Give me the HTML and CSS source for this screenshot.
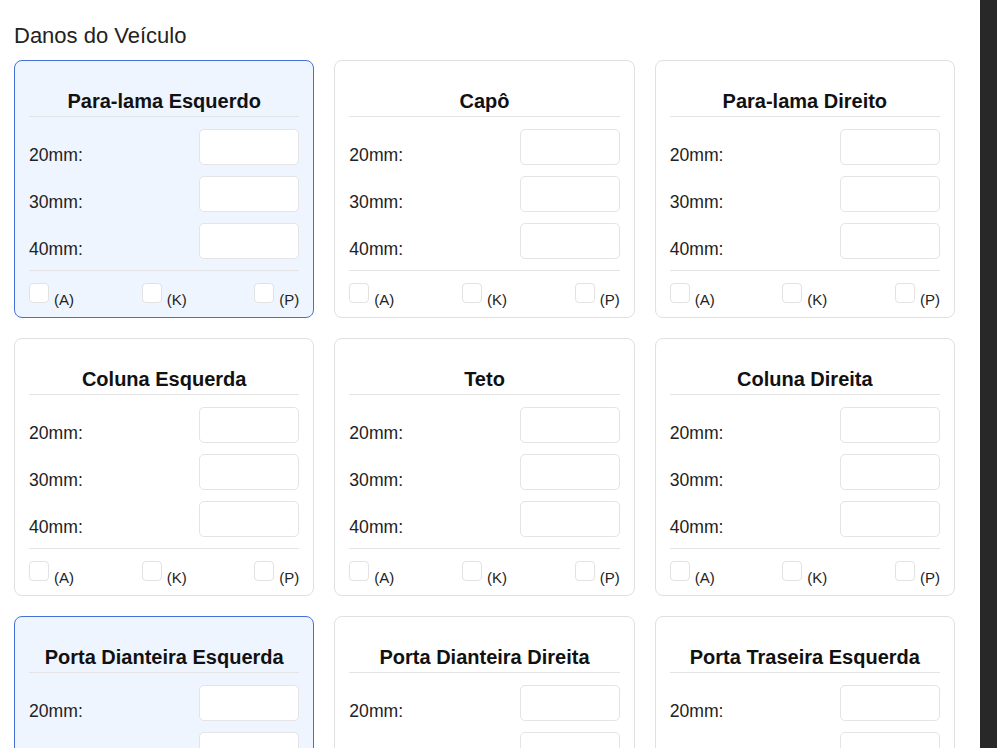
FILE: index.html
```html
<!DOCTYPE html>
<html lang="pt">
<head>
<meta charset="utf-8">
<title>Danos do Veículo</title>
<link rel="stylesheet" href="styles.css">
</head>
<body>
<main class="page">
  <h2 class="page-title">Danos do Veículo</h2>
  <div class="grid">
    <section class="card selected">
      <h3 class="card-title">Para-lama Esquerdo</h3>
      <div class="fields">
        <label class="field"><span class="field-label">20mm:</span><input class="field-input" type="text"></label>
        <label class="field"><span class="field-label">30mm:</span><input class="field-input" type="text"></label>
        <label class="field"><span class="field-label">40mm:</span><input class="field-input" type="text"></label>
      </div>
      <div class="checks">
        <label class="check"><input class="check-box" type="checkbox"><span class="check-text">(A)</span></label>
        <label class="check"><input class="check-box" type="checkbox"><span class="check-text">(K)</span></label>
        <label class="check"><input class="check-box" type="checkbox"><span class="check-text">(P)</span></label>
      </div>
    </section>
    <section class="card">
      <h3 class="card-title">Capô</h3>
      <div class="fields">
        <label class="field"><span class="field-label">20mm:</span><input class="field-input" type="text"></label>
        <label class="field"><span class="field-label">30mm:</span><input class="field-input" type="text"></label>
        <label class="field"><span class="field-label">40mm:</span><input class="field-input" type="text"></label>
      </div>
      <div class="checks">
        <label class="check"><input class="check-box" type="checkbox"><span class="check-text">(A)</span></label>
        <label class="check"><input class="check-box" type="checkbox"><span class="check-text">(K)</span></label>
        <label class="check"><input class="check-box" type="checkbox"><span class="check-text">(P)</span></label>
      </div>
    </section>
    <section class="card">
      <h3 class="card-title">Para-lama Direito</h3>
      <div class="fields">
        <label class="field"><span class="field-label">20mm:</span><input class="field-input" type="text"></label>
        <label class="field"><span class="field-label">30mm:</span><input class="field-input" type="text"></label>
        <label class="field"><span class="field-label">40mm:</span><input class="field-input" type="text"></label>
      </div>
      <div class="checks">
        <label class="check"><input class="check-box" type="checkbox"><span class="check-text">(A)</span></label>
        <label class="check"><input class="check-box" type="checkbox"><span class="check-text">(K)</span></label>
        <label class="check"><input class="check-box" type="checkbox"><span class="check-text">(P)</span></label>
      </div>
    </section>
    <section class="card">
      <h3 class="card-title">Coluna Esquerda</h3>
      <div class="fields">
        <label class="field"><span class="field-label">20mm:</span><input class="field-input" type="text"></label>
        <label class="field"><span class="field-label">30mm:</span><input class="field-input" type="text"></label>
        <label class="field"><span class="field-label">40mm:</span><input class="field-input" type="text"></label>
      </div>
      <div class="checks">
        <label class="check"><input class="check-box" type="checkbox"><span class="check-text">(A)</span></label>
        <label class="check"><input class="check-box" type="checkbox"><span class="check-text">(K)</span></label>
        <label class="check"><input class="check-box" type="checkbox"><span class="check-text">(P)</span></label>
      </div>
    </section>
    <section class="card">
      <h3 class="card-title">Teto</h3>
      <div class="fields">
        <label class="field"><span class="field-label">20mm:</span><input class="field-input" type="text"></label>
        <label class="field"><span class="field-label">30mm:</span><input class="field-input" type="text"></label>
        <label class="field"><span class="field-label">40mm:</span><input class="field-input" type="text"></label>
      </div>
      <div class="checks">
        <label class="check"><input class="check-box" type="checkbox"><span class="check-text">(A)</span></label>
        <label class="check"><input class="check-box" type="checkbox"><span class="check-text">(K)</span></label>
        <label class="check"><input class="check-box" type="checkbox"><span class="check-text">(P)</span></label>
      </div>
    </section>
    <section class="card">
      <h3 class="card-title">Coluna Direita</h3>
      <div class="fields">
        <label class="field"><span class="field-label">20mm:</span><input class="field-input" type="text"></label>
        <label class="field"><span class="field-label">30mm:</span><input class="field-input" type="text"></label>
        <label class="field"><span class="field-label">40mm:</span><input class="field-input" type="text"></label>
      </div>
      <div class="checks">
        <label class="check"><input class="check-box" type="checkbox"><span class="check-text">(A)</span></label>
        <label class="check"><input class="check-box" type="checkbox"><span class="check-text">(K)</span></label>
        <label class="check"><input class="check-box" type="checkbox"><span class="check-text">(P)</span></label>
      </div>
    </section>
    <section class="card selected">
      <h3 class="card-title">Porta Dianteira Esquerda</h3>
      <div class="fields">
        <label class="field"><span class="field-label">20mm:</span><input class="field-input" type="text"></label>
        <label class="field"><span class="field-label">30mm:</span><input class="field-input" type="text"></label>
        <label class="field"><span class="field-label">40mm:</span><input class="field-input" type="text"></label>
      </div>
      <div class="checks">
        <label class="check"><input class="check-box" type="checkbox"><span class="check-text">(A)</span></label>
        <label class="check"><input class="check-box" type="checkbox"><span class="check-text">(K)</span></label>
        <label class="check"><input class="check-box" type="checkbox"><span class="check-text">(P)</span></label>
      </div>
    </section>
    <section class="card">
      <h3 class="card-title">Porta Dianteira Direita</h3>
      <div class="fields">
        <label class="field"><span class="field-label">20mm:</span><input class="field-input" type="text"></label>
        <label class="field"><span class="field-label">30mm:</span><input class="field-input" type="text"></label>
        <label class="field"><span class="field-label">40mm:</span><input class="field-input" type="text"></label>
      </div>
      <div class="checks">
        <label class="check"><input class="check-box" type="checkbox"><span class="check-text">(A)</span></label>
        <label class="check"><input class="check-box" type="checkbox"><span class="check-text">(K)</span></label>
        <label class="check"><input class="check-box" type="checkbox"><span class="check-text">(P)</span></label>
      </div>
    </section>
    <section class="card">
      <h3 class="card-title">Porta Traseira Esquerda</h3>
      <div class="fields">
        <label class="field"><span class="field-label">20mm:</span><input class="field-input" type="text"></label>
        <label class="field"><span class="field-label">30mm:</span><input class="field-input" type="text"></label>
        <label class="field"><span class="field-label">40mm:</span><input class="field-input" type="text"></label>
      </div>
      <div class="checks">
        <label class="check"><input class="check-box" type="checkbox"><span class="check-text">(A)</span></label>
        <label class="check"><input class="check-box" type="checkbox"><span class="check-text">(K)</span></label>
        <label class="check"><input class="check-box" type="checkbox"><span class="check-text">(P)</span></label>
      </div>
    </section>
  </div>
</main>
<div class="scrollbar"></div>
</body>
</html>
```
FILE: styles.css
```css
* {
  box-sizing: border-box;
}

html, body {
  height: 100%;
}

body {
  margin: 0;
  display: flex;
  overflow: hidden;
  background: #ffffff;
  color: #222222;
  font-family: "Liberation Sans", Arial, sans-serif;
}

.page {
  flex: 1;
  min-width: 0;
  padding: 0 25px 0 14px;
}

.scrollbar {
  width: 17px;
  flex-shrink: 0;
  background: #282828;
}

.page-title {
  margin: 23px 0 12px;
  font-size: 22px;
  font-weight: normal;
  line-height: 25px;
  color: #222222;
}

.grid {
  display: grid;
  grid-template-columns: repeat(3, 1fr);
  gap: 20px;
}

.card {
  background: #ffffff;
  border: 1px solid #e0e0e0;
  border-radius: 8px;
  padding: 14px;
}

.card.selected {
  background: #eff5ff;
  border-color: #4770d6;
}

.card-title {
  margin: 15px 0 0;
  padding-bottom: 3px;
  border-bottom: 1px solid #e4e4e4;
  font-size: 20px;
  line-height: 23px;
  font-weight: bold;
  text-align: center;
  color: #111111;
}

.fields {
  display: flex;
  flex-direction: column;
  gap: 11px;
  margin-top: 12px;
}

.field {
  display: flex;
  justify-content: space-between;
  align-items: flex-end;
}

.field-label {
  font-size: 17.6px;
  line-height: 22px;
  margin-bottom: -1px;
}

.field-input {
  width: 100px;
  height: 36px;
  margin: 0;
  padding: 0 8px;
  border: 1px solid #e4e4e4;
  border-radius: 5px;
  background: #ffffff;
  font: inherit;
}

.checks {
  display: flex;
  justify-content: space-between;
  margin-top: 11px;
  padding-top: 12px;
  border-top: 1px solid #e4e4e4;
}

.check {
  display: flex;
  align-items: flex-end;
  gap: 5px;
}

.check-box {
  appearance: none;
  -webkit-appearance: none;
  width: 20px;
  height: 20px;
  margin: 0;
  border: 1px solid #e2e2e2;
  border-radius: 4px;
  background: #ffffff;
}

.check-text {
  font-size: 15px;
  line-height: 15px;
  margin-bottom: -4px;
}
```
